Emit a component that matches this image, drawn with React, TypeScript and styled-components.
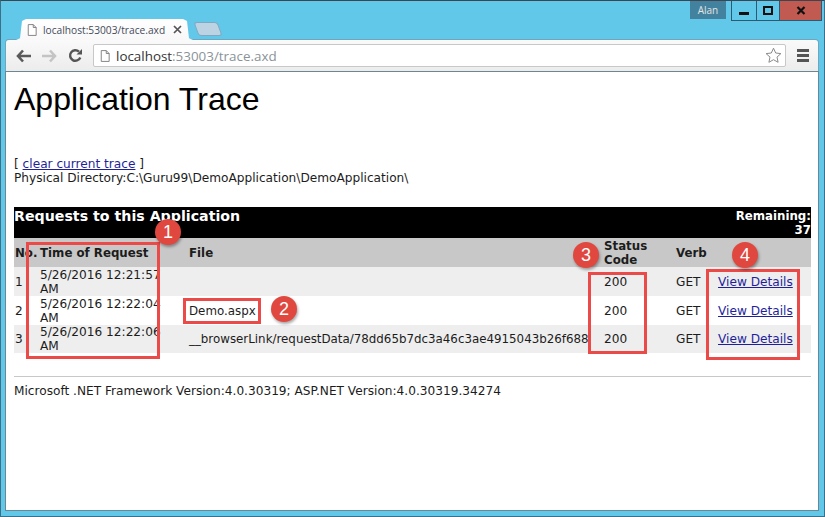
import React from "react";
import styled, { createGlobalStyle } from "styled-components";

const GlobalStyle = createGlobalStyle`
  html, body {
    margin: 0;
    padding: 0;
    background: #62c8ea;
  }
`;

const rows = [
  { no: 1, time: "5/26/2016 12:21:57 AM", file: "" },
  { no: 2, time: "5/26/2016 12:22:04 AM", file: "Demo.aspx" },
  { no: 3, time: "5/26/2016 12:22:06 AM", file: "__browserLink/requestData/78dd65b7dc3a46c3ae4915043b26f688" },
];

function PageIcon({ size }: { size: number }) {
  return (
    <svg width={size} height={size + 2} viewBox="0 0 12 14">
      <path d="M1.500.5h6l3.500 3.500v9.500H1.500z M7.500.5V4H11" fill="#fff" stroke="#7c7c7c" strokeWidth="1.100" />
    </svg>
  );
}

export default function App() {
  return (
    <Frame>
      <GlobalStyle />
      <TitleBar>
        <TabStrip>
          <Tab>
            <PageIcon size={10} />
            <TabTitle>localhost:53003/trace.axd</TabTitle>
            <TabClose>
              <svg width="9" height="9" viewBox="0 0 9 9">
                <path d="M1 1l7 7M8 1 1 8" stroke="#555" strokeWidth="1.700" />
              </svg>
            </TabClose>
          </Tab>
          <NewTab />
        </TabStrip>
        <WindowArea>
          <UserBadge>Alan</UserBadge>
          <WindowButtons>
            <WinButton $width={24}>
              <svg width="10" height="8" viewBox="0 0 10 8">
                <rect width="10" height="3" y="5" fill="#111" />
              </svg>
            </WinButton>
            <WinButton $width={22}>
              <svg width="10" height="9" viewBox="0 0 10 9">
                <rect x="1" y="1" width="8" height="7" fill="none" stroke="#111" strokeWidth="2" />
              </svg>
            </WinButton>
            <WinButton $width={41} $close>
              <svg width="10" height="9" viewBox="0 0 10 9">
                <path d="M1.500 1l7 7M8.500 1l-7 7" stroke="#111" strokeWidth="2.200" />
              </svg>
            </WinButton>
          </WindowButtons>
        </WindowArea>
      </TitleBar>
      <Chrome>
        <NavIcon>
          <svg width="15" height="14" viewBox="0 0 15 14">
            <path d="M7 1.500 2 7l5 5.500M2.500 7H15" fill="none" stroke="#5a5a5a" strokeWidth="2.600" />
          </svg>
        </NavIcon>
        <NavIcon>
          <svg width="15" height="14" viewBox="0 0 15 14">
            <path d="M8 1.500 13 7l-5 5.500M12.500 7H0" fill="none" stroke="#c4c4c4" strokeWidth="2.600" />
          </svg>
        </NavIcon>
        <NavIcon>
          <svg width="15" height="15" viewBox="0 0 15 15">
            <path d="M12.300 9.500A5.300 5.300 0 1 1 11 3.600" fill="none" stroke="#555" strokeWidth="2.400" />
            <path d="M8.500 6.500H14V1z" fill="#555" />
          </svg>
        </NavIcon>
        <AddressBar>
          <PageIcon size={10} />
          <Url>
            localhost<UrlRest>:53003/trace.axd</UrlRest>
          </Url>
          <svg width="17" height="17" viewBox="0 0 17 17">
            <path
              d="M8.500 1.200l2.200 4.800 5.200.6-3.900 3.500 1.100 5.200-4.600-2.600-4.600 2.600 1.100-5.200L1.100 6.600l5.200-.6z"
              fill="#fff"
              stroke="#8a8a8a"
            />
          </svg>
        </AddressBar>
        <Menu>
          <MenuBar />
          <MenuBar />
          <MenuBar />
        </Menu>
      </Chrome>
      <Page>
        <Heading>Application Trace</Heading>
        <ClearLine>
          [ <TraceLink href="#">clear current trace</TraceLink> ]
        </ClearLine>
        <PathLine>Physical Directory:C:\Guru99\DemoApplication\DemoApplication\</PathLine>
        <TraceTable>
          <colgroup>
            <col width={25} />
            <col width={149} />
            <col width={415} />
            <col width={72} />
            <col width={42} />
            <col width={94} />
          </colgroup>
          <thead>
            <tr>
              <TitleCell colSpan={3}>Requests to this Application</TitleCell>
              <RemainingCell colSpan={3}>
                Remaining:
                <br />
                37
              </RemainingCell>
            </tr>
            <tr>
              <HeadCell>No.</HeadCell>
              <HeadCell>Time of Request</HeadCell>
              <HeadCell>File</HeadCell>
              <HeadCell>
                Status
                <br />
                Code
              </HeadCell>
              <HeadCell>Verb</HeadCell>
              <HeadCell />
            </tr>
          </thead>
          <tbody>
            {rows.map((row) => (
              <Row key={row.no} $alt={row.no % 2 === 1}>
                <Cell>{row.no}</Cell>
                <TimeCell>{row.time}</TimeCell>
                <FileCell>{row.file}</FileCell>
                <Cell>200</Cell>
                <Cell>GET</Cell>
                <Cell>
                  <TraceLink href="#">View Details</TraceLink>
                </Cell>
              </Row>
            ))}
          </tbody>
        </TraceTable>
        <Rule />
        <Footer>Microsoft .NET Framework Version:4.0.30319; ASP.NET Version:4.0.30319.34274</Footer>

        <Callout $left={20} $top={170} $width={134} $height={117} />
        <Callout $left={177} $top={226} $width={78} $height={26} />
        <Callout $left={582} $top={200} $width={59} $height={82} />
        <Callout $left={700} $top={197} $width={94} $height={91} />
        <Badge $left={149} $top={147}>1</Badge>
        <Badge $left={265} $top={224}>2</Badge>
        <Badge $left={567} $top={170}>3</Badge>
        <Badge $left={726} $top={170}>4</Badge>
      </Page>
    </Frame>
  );
}

const Frame = styled.div`
  width: 825px;
  height: 517px;
  box-sizing: border-box;
  padding: 0 6px 6px 5px;
  display: flex;
  flex-direction: column;
  background: #62c8ea;
  border: 1px solid #3d6f86;
  border-top-color: #3d4650;
  overflow: hidden;
`;

const TitleBar = styled.div`
  height: 39px;
  display: flex;
  justify-content: space-between;
  flex: none;
`;

const TabStrip = styled.div`
  display: flex;
  align-items: flex-end;
  padding-left: 10px;
`;

const Tab = styled.div`
  width: 177px;
  height: 21px;
  box-sizing: border-box;
  padding: 0 11px 0 11px;
  display: flex;
  align-items: center;
  background: linear-gradient(#ffffff, #f8f8f8);
  clip-path: polygon(0 100%, 4px 92%, 6px 10%, 10px 0, calc(100% - 10px) 0, calc(100% - 6px) 10%, calc(100% - 4px) 92%, 100% 100%);
`;

const TabTitle = styled.span`
  flex: 1;
  margin-left: 6px;
  font: 10.2px "Open Sans", sans-serif;
  color: #444a5a;
  white-space: nowrap;
`;

const TabClose = styled.span`
  display: flex;
`;

const NewTab = styled.div`
  width: 22px;
  height: 12px;
  margin: 0 0 4px 3px;
  background: #bcd3e4;
  border: 1px solid #7fa9c2;
  border-radius: 3px;
  transform: skewX(20deg);
`;

const WindowArea = styled.div`
  display: flex;
  align-items: flex-start;
  margin-right: -4px;
`;

const UserBadge = styled.div`
  width: 36px;
  height: 18px;
  margin-right: 5px;
  background: #42829e;
  color: #e4e4e4;
  font: 10px/18px "Open Sans", sans-serif;
  text-align: center;
`;

const WindowButtons = styled.div`
  display: flex;
  height: 19px;
  border: 1px solid #2d5a70;
  border-top: none;
`;

const WinButton = styled.div<{ $width: number; $close?: boolean }>`
  width: ${(p) => p.$width}px;
  display: flex;
  align-items: center;
  justify-content: center;
  background: ${(p) => (p.$close ? "#c15a50" : "#62c8ea")};
  border-right: ${(p) => (p.$close ? "none" : "1px solid #2d5a70")};
`;

const Chrome = styled.div`
  height: 32px;
  flex: none;
  box-sizing: border-box;
  padding: 4px 2px 4px 4px;
  display: flex;
  align-items: center;
  background: linear-gradient(#fafafa, #ececec);
  border-bottom: 1px solid #a8a8a8;
  border-radius: 3px 3px 0 0;
  box-shadow: 0 0 0 1px #6fa6bd;
`;

const NavIcon = styled.div`
  width: 26px;
  display: flex;
  justify-content: center;
  flex: none;
`;

const AddressBar = styled.div`
  flex: 1;
  height: 23px;
  margin: 0 4px 0 5px;
  box-sizing: border-box;
  padding: 0 3px 0 6px;
  display: flex;
  align-items: center;
  background: #fff;
  border: 1px solid #c8c8c8;
  border-radius: 2px;
`;

const Url = styled.span`
  flex: 1;
  margin-left: 6px;
  font: 13.4px "Open Sans", sans-serif;
  color: #333;
`;

const UrlRest = styled.span`
  color: #8a9298;
`;

const Menu = styled.div`
  width: 26px;
  flex: none;
  display: flex;
  flex-direction: column;
  align-items: center;
  gap: 2px;
`;

const MenuBar = styled.span`
  width: 12px;
  height: 3px;
  background: #555;
`;

const Page = styled.div`
  position: relative;
  flex: 1;
  box-sizing: border-box;
  padding: 0 7px 0 8px;
  background: #fff;
  box-shadow: 0 0 0 1px #6b8794;
  font: 12.15px "DejaVu Sans", Verdana, sans-serif;
  color: #1c1c1c;
`;

const Heading = styled.h1`
  margin: 8px 0 0;
  font: 400 32px/38px "Liberation Sans", Arial, sans-serif;
  color: #000;
`;

const ClearLine = styled.div`
  margin-top: 39px;
  line-height: 14px;
`;

const PathLine = styled.div`
  line-height: 15px;
`;

const TraceLink = styled.a`
  color: #1f1f9c;
  text-decoration: underline;
`;

const TraceTable = styled.table`
  margin-top: 21px;
  width: 797px;
  border-collapse: collapse;
  table-layout: fixed;
`;

const TitleCell = styled.th`
  height: 31px;
  padding: 0;
  background: #000;
  color: #fff;
  font-size: 14.200px;
  font-weight: 700;
  text-align: left;
  vertical-align: top;
  line-height: 18px;
`;

const RemainingCell = styled.th`
  padding: 1px 0 0;
  background: #000;
  color: #fff;
  font-size: 11.800px;
  font-weight: 700;
  text-align: right;
  line-height: 14px;
`;

const HeadCell = styled.th`
  height: 29px;
  padding: 0 0 0 1px;
  background: #c8c8c8;
  font-size: 11.800px;
  font-weight: 700;
  line-height: 14px;
  text-align: left;
  white-space: nowrap;
`;

const Row = styled.tr<{ $alt: boolean }>`
  background: ${(p) => (p.$alt ? "#eeeeee" : "#ffffff")};
  &:last-child td {
    height: 28px;
  }
`;

const Cell = styled.td`
  height: 29px;
  padding: 0 0 0 1px;
  line-height: 14px;
  white-space: nowrap;
`;

const FileCell = styled(Cell)`
  font-size: 11.85px;
`;

const TimeCell = styled.td`
  padding: 0 26px 0 1px;
  line-height: 14px;
`;

const Rule = styled.hr`
  margin: 23px 0 0;
  border: none;
  border-top: 1px solid #c8c8c8;
`;

const Footer = styled.div`
  margin-top: 7px;
  line-height: 14px;
`;

const Callout = styled.div<{ $left: number; $top: number; $width: number; $height: number }>`
  position: absolute;
  box-sizing: border-box;
  left: ${(p) => p.$left}px;
  top: ${(p) => p.$top}px;
  width: ${(p) => p.$width}px;
  height: ${(p) => p.$height}px;
  border: 3px solid #ea4a48;
`;

const Badge = styled.div<{ $left: number; $top: number }>`
  position: absolute;
  left: ${(p) => p.$left}px;
  top: ${(p) => p.$top}px;
  width: 26px;
  height: 26px;
  border-radius: 50%;
  background: #e0483f;
  color: #fff;
  font: 18px/26px "Liberation Sans", Arial, sans-serif;
  text-align: center;
  box-shadow: 1px 2px 3px rgba(0, 0, 0, 0.35);
`;
